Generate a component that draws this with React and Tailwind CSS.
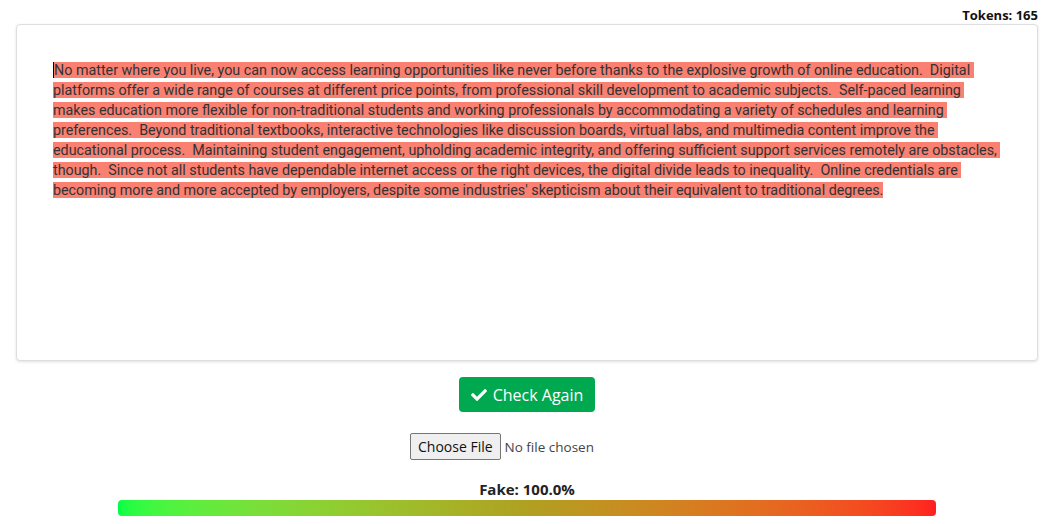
import React from 'react';
import { FaCheck } from 'react-icons/fa';

const text =
  "No matter where you live, you can now access learning opportunities like never before thanks to the explosive growth of online education.  Digital platforms offer a wide range of courses at different price points, from professional skill development to academic subjects.  Self-paced learning makes education more flexible for non-traditional students and working professionals by accommodating a variety of schedules and learning preferences.  Beyond traditional textbooks, interactive technologies like discussion boards, virtual labs, and multimedia content improve the educational process.  Maintaining student engagement, upholding academic integrity, and offering sufficient support services remotely are obstacles, though.  Since not all students have dependable internet access or the right devices, the digital divide leads to inequality.  Online credentials are becoming more and more accepted by employers, despite some industries' skepticism about their equivalent to traditional degrees.";

const App = () => {
  return (
    <div className="min-h-screen bg-white pl-4 pr-6 pt-[6px] font-['Open_Sans',sans-serif] text-[#212529]">
      <div className="text-right text-[13px] font-bold leading-[18px] text-[#111]">Tokens: 165</div>

      <div className="h-[337px] rounded border border-[#dedede] bg-white pl-[36px] pr-[33px] pt-[35px] shadow-[0_1px_3px_rgba(0,0,0,0.12)]">
        <p className="whitespace-pre-wrap font-['Roboto',sans-serif] text-[14.3px] leading-[20px] text-[#333]">
          <span className="border-l border-black bg-[#fa8072]">{text}</span>
        </p>
      </div>

      <div className="mt-4 flex justify-center">
        <button className="flex h-[35px] items-center gap-[6px] rounded bg-[#00a94f] px-3 text-[16px] text-white">
          <FaCheck className="h-[16px] w-[16px]" />
          Check Again
        </button>
      </div>

      <div className="mt-[21px] flex justify-center">
        <input
          type="file"
          className="w-[234px] text-[13.5px] text-[#444] file:mr-[4px] file:h-[27px] file:rounded-[2px] file:border file:border-[#767676] file:bg-[#efefef] file:px-[7px] file:text-[14px] file:text-[#111]"
        />
      </div>

      <div className="mt-[19px] text-center text-[15px] font-bold leading-[20px] text-[#222]">Fake: 100.0%</div>
      <div className="mx-auto mt-[1px] h-4 w-[80%] rounded bg-gradient-to-r from-[#00ff44] via-[#b0a020] to-[#ff2020]" />
    </div>
  );
};

export default App;
